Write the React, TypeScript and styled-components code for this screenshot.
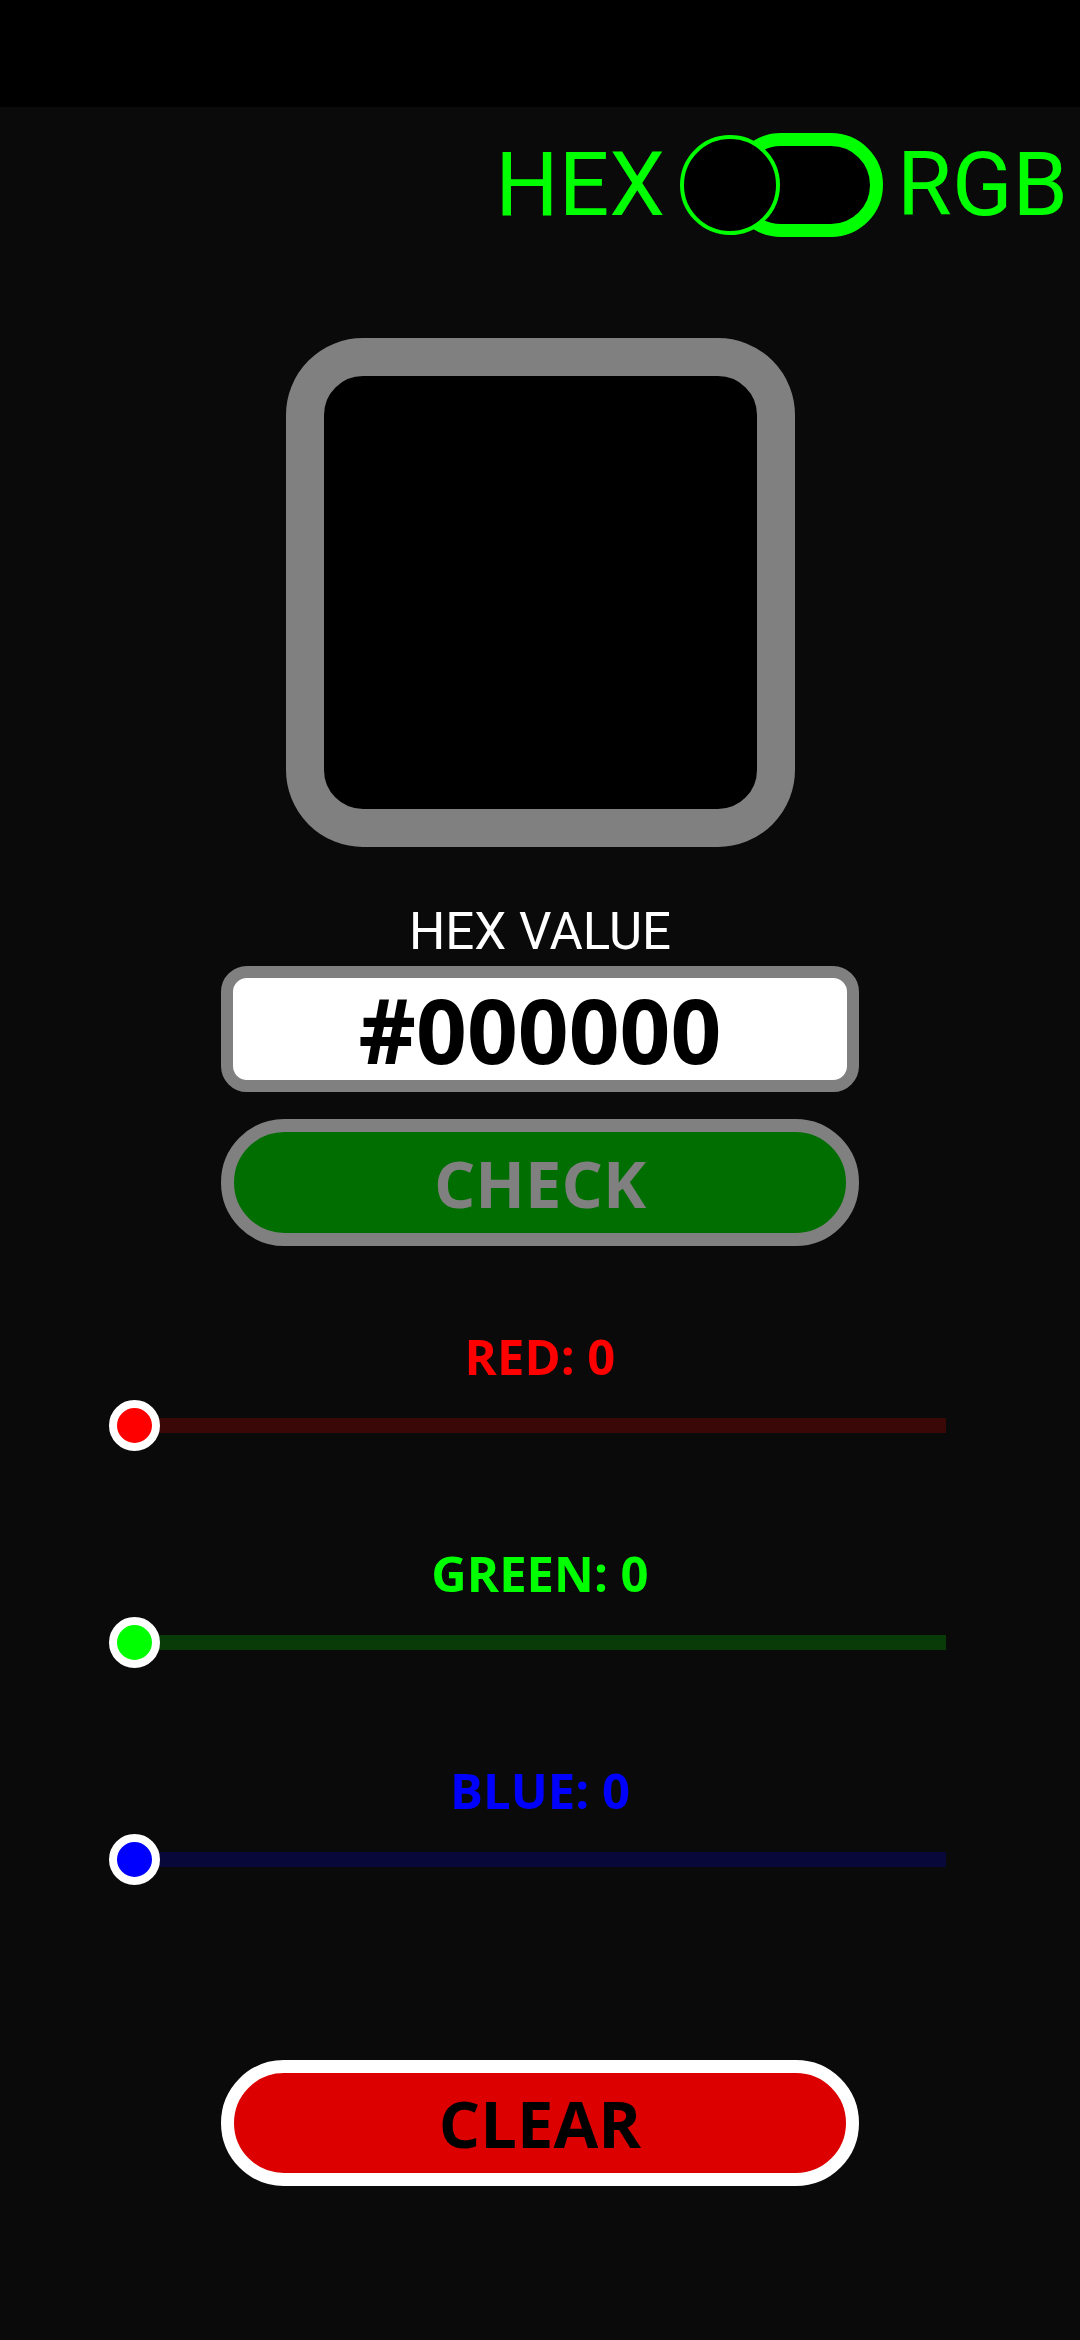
import React, { useState } from 'react';
import styled, { createGlobalStyle } from 'styled-components';

const GlobalStyle = createGlobalStyle`
  html, body {
    margin: 0;
    padding: 0;
    background: #0a0a0a;
  }
  * { box-sizing: border-box; }
`

const Screen = styled.div`
  width: 1080px;
  min-height: 2340px;
  background: #0a0a0a;
  display: flex;
  flex-direction: column;
  font-family: "Open Sans", "Noto Sans", sans-serif;
`

const StatusBar = styled.div`
  height: 107px;
  background: #000;
`

const ModeRow = styled.div`
  margin-top: 26px;
  height: 104px;
  display: flex;
  justify-content: flex-end;
  align-items: center;
  gap: 14px;
  padding-right: 12px;
`

const ModeLabel = styled.span`
  font-family: Roboto, "Noto Sans", sans-serif;
  font-size: 89px;
  line-height: 104px;
  color: #00ff00;
`

const Switch = styled.div`
  position: relative;
  width: 204px;
  height: 104px;
  cursor: pointer;
`

const SwitchTrack = styled.div`
  margin-left: 50px;
  width: 154px;
  height: 104px;
  border: 13px solid #00ff00;
  border-radius: 52px;
  background: #000;
`

const SwitchKnob = styled.div<{ $on: boolean }>`
  position: absolute;
  top: 2px;
  left: ${p => (p.$on ? '104px' : '1px')};
  width: 100px;
  height: 100px;
  border-radius: 50%;
  border: 4px solid #00ff00;
  background: #000;
`

const Swatch = styled.div`
  margin: 101px auto 0;
  width: 509px;
  height: 509px;
  border: 38px solid #808080;
  border-radius: 77px;
`

const FieldLabel = styled.div`
  margin-top: 60px;
  font-family: Roboto, "Noto Sans", sans-serif;
  font-size: 51px;
  line-height: 50px;
  color: #fff;
  text-align: center;
`

const HexField = styled.div`
  margin: 9px auto 0;
  width: 638px;
  height: 126px;
  border: 12px solid #808080;
  border-radius: 26px;
  background: #fff;
  display: flex;
  align-items: center;
  justify-content: center;
  font-weight: 700;
  font-size: 89px;
  color: #000;
`

const PillButton = styled.button<{ $bg: string; $ring: string; $ink: string }>`
  margin: 0 auto;
  width: 638px;
  height: 127px;
  border: 13px solid ${p => p.$ring};
  border-radius: 64px;
  background: ${p => p.$bg};
  color: ${p => p.$ink};
  font-family: "Open Sans", "Noto Sans", sans-serif;
  font-weight: 700;
  font-size: 65px;
  display: flex;
  align-items: center;
  justify-content: center;
  padding: 0;
`

const CheckButton = styled(PillButton)`
  margin-top: 27px;
`

const ClearButton = styled(PillButton)`
  margin-top: 175px;
  height: 126px;
`

const Channels = styled.div`
  margin-top: 86px;
  display: flex;
  flex-direction: column;
  gap: 98px;
`

const Channel = styled.div`
  display: flex;
  flex-direction: column;
  gap: 20px;
`

const ChannelLabel = styled.div<{ $color: string }>`
  font-weight: 700;
  font-size: 49px;
  line-height: 48px;
  color: ${p => p.$color};
  text-align: center;
`

const Slider = styled.div`
  position: relative;
  margin: 0 134px 0 134px;
  height: 51px;
  display: flex;
  align-items: center;
`

const SliderTrack = styled.div<{ $tint: string }>`
  flex: 1;
  height: 15px;
  background: ${p => p.$tint};
`

const SliderThumb = styled.div<{ $color: string }>`
  position: absolute;
  top: 0;
  width: 51px;
  height: 51px;
  margin-left: -25px;
  border-radius: 50%;
  border: 8px solid #fff;
  background: ${p => p.$color};
`

interface ChannelProps {
  name: string,
  color: string,
  tint: string,
  value: number
}

const ChannelSlider = ({ name, color, tint, value }: ChannelProps) => (
  <Channel>
    <ChannelLabel $color={color}>{name}: {value}</ChannelLabel>
    <Slider>
      <SliderTrack $tint={tint} />
      <SliderThumb $color={color} style={{ left: `${(value / 255) * 100}%` }} />
    </Slider>
  </Channel>
);

const toHex = (n: number) => n.toString(16).padStart(2, '0').toUpperCase();

const App = () => {
  const [rgbMode, setRgbMode] = useState(false);
  const [rgb, setRgb] = useState({ r: 0, g: 0, b: 0 });
  const hex = `#${toHex(rgb.r)}${toHex(rgb.g)}${toHex(rgb.b)}`;

  return (
    <Screen>
      <GlobalStyle />
      <StatusBar />
      <ModeRow>
        <ModeLabel>HEX</ModeLabel>
        <Switch onClick={() => setRgbMode(!rgbMode)}>
          <SwitchTrack />
          <SwitchKnob $on={rgbMode} />
        </Switch>
        <ModeLabel>RGB</ModeLabel>
      </ModeRow>
      <Swatch style={{ backgroundColor: hex }} />
      <FieldLabel>HEX VALUE</FieldLabel>
      <HexField>{hex}</HexField>
      <CheckButton $bg="#006e00" $ring="#808080" $ink="#808080">CHECK</CheckButton>
      <Channels>
        <ChannelSlider name="RED" color="#ff0000" tint="rgba(255, 0, 0, 0.2)" value={rgb.r} />
        <ChannelSlider name="GREEN" color="#00ff00" tint="rgba(0, 255, 0, 0.2)" value={rgb.g} />
        <ChannelSlider name="BLUE" color="#0000ff" tint="rgba(0, 0, 255, 0.2)" value={rgb.b} />
      </Channels>
      <ClearButton $bg="#dd0000" $ring="#ffffff" $ink="#000000" onClick={() => setRgb({ r: 0, g: 0, b: 0 })}>
        CLEAR
      </ClearButton>
    </Screen>
  );
};

export default App;
